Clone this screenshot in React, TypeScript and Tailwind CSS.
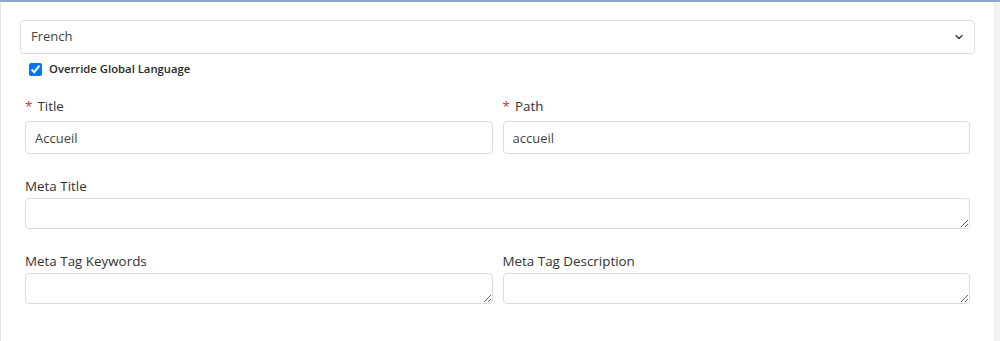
import { ChevronDown } from 'lucide-react';

const font = { fontFamily: '"Open Sans", "Noto Sans", sans-serif' };

const Label = ({ text, required, className = '' }: { text: string; required?: boolean; className?: string }) => (
  <div className={`h-5 leading-5 text-[13.4px] text-[#333] ${className}`}>
    {required && <span className="text-[#c0392b] mr-[5px]">*</span>}
    {text}
  </div>
);

export default function App() {
  return (
    <div className="w-[1000px] h-[341px] bg-white border-t-2 border-[#8ea7c6] flex overflow-hidden" style={font}>
      {/* Main panel */}
      <div className="flex-1 border-l border-[#e4e4e4] px-[19px] pt-[18px]">
        {/* Language select */}
        <div className="relative h-[34px] border border-[#dedede] rounded-[4px] flex items-center pl-[10px] text-[13px] text-[#444]">
          French
          <ChevronDown size={12} strokeWidth={2.5} className="absolute right-[9px] top-[10px] text-[#333]" />
        </div>

        {/* Override checkbox */}
        <label className="flex items-center mt-[8px] pl-[9px] h-[15px]">
          <input type="checkbox" defaultChecked className="w-[13px] h-[13px] m-0 accent-[#0075ff]" />
          <span className="ml-[7px] text-[11.3px] font-semibold text-[#2a2a2a]">Override Global Language</span>
        </label>

        <div className="px-[5px]">
          {/* Title / Path */}
          <div className="grid grid-cols-2 gap-[10px] mt-[19px]">
            <div>
              <Label text="Title" required className="mb-[5px]" />
              <input
                defaultValue="Accueil"
                className="w-full h-[33px] border border-[#dcdcdc] rounded-[4px] px-[9px] text-[13px] text-[#444] outline-none"
              />
            </div>
            <div>
              <Label text="Path" required className="mb-[5px]" />
              <input
                defaultValue="accueil"
                className="w-full h-[33px] border border-[#dcdcdc] rounded-[4px] px-[9px] text-[13px] text-[#444] outline-none"
              />
            </div>
          </div>

          {/* Meta Title */}
          <div className="mt-[22px]">
            <Label text="Meta Title" className="mb-[2px]" />
            <textarea className="block w-full h-[31px] border border-[#dcdcdc] rounded-[4px] px-[9px] text-[13px] outline-none" />
          </div>

          {/* Keywords / Description */}
          <div className="grid grid-cols-2 gap-[10px] mt-[22px]">
            <div>
              <Label text="Meta Tag Keywords" className="mb-[2px]" />
              <textarea className="block w-full h-[31px] border border-[#dcdcdc] rounded-[4px] px-[9px] text-[13px] outline-none" />
            </div>
            <div>
              <Label text="Meta Tag Description" className="mb-[2px]" />
              <textarea className="block w-full h-[31px] border border-[#dcdcdc] rounded-[4px] px-[9px] text-[13px] outline-none" />
            </div>
          </div>
        </div>
      </div>

      {/* Right gutter */}
      <div className="w-[6px] bg-[#f3f3f3] border-l border-[#e8e8e8]" />
    </div>
  );
}
